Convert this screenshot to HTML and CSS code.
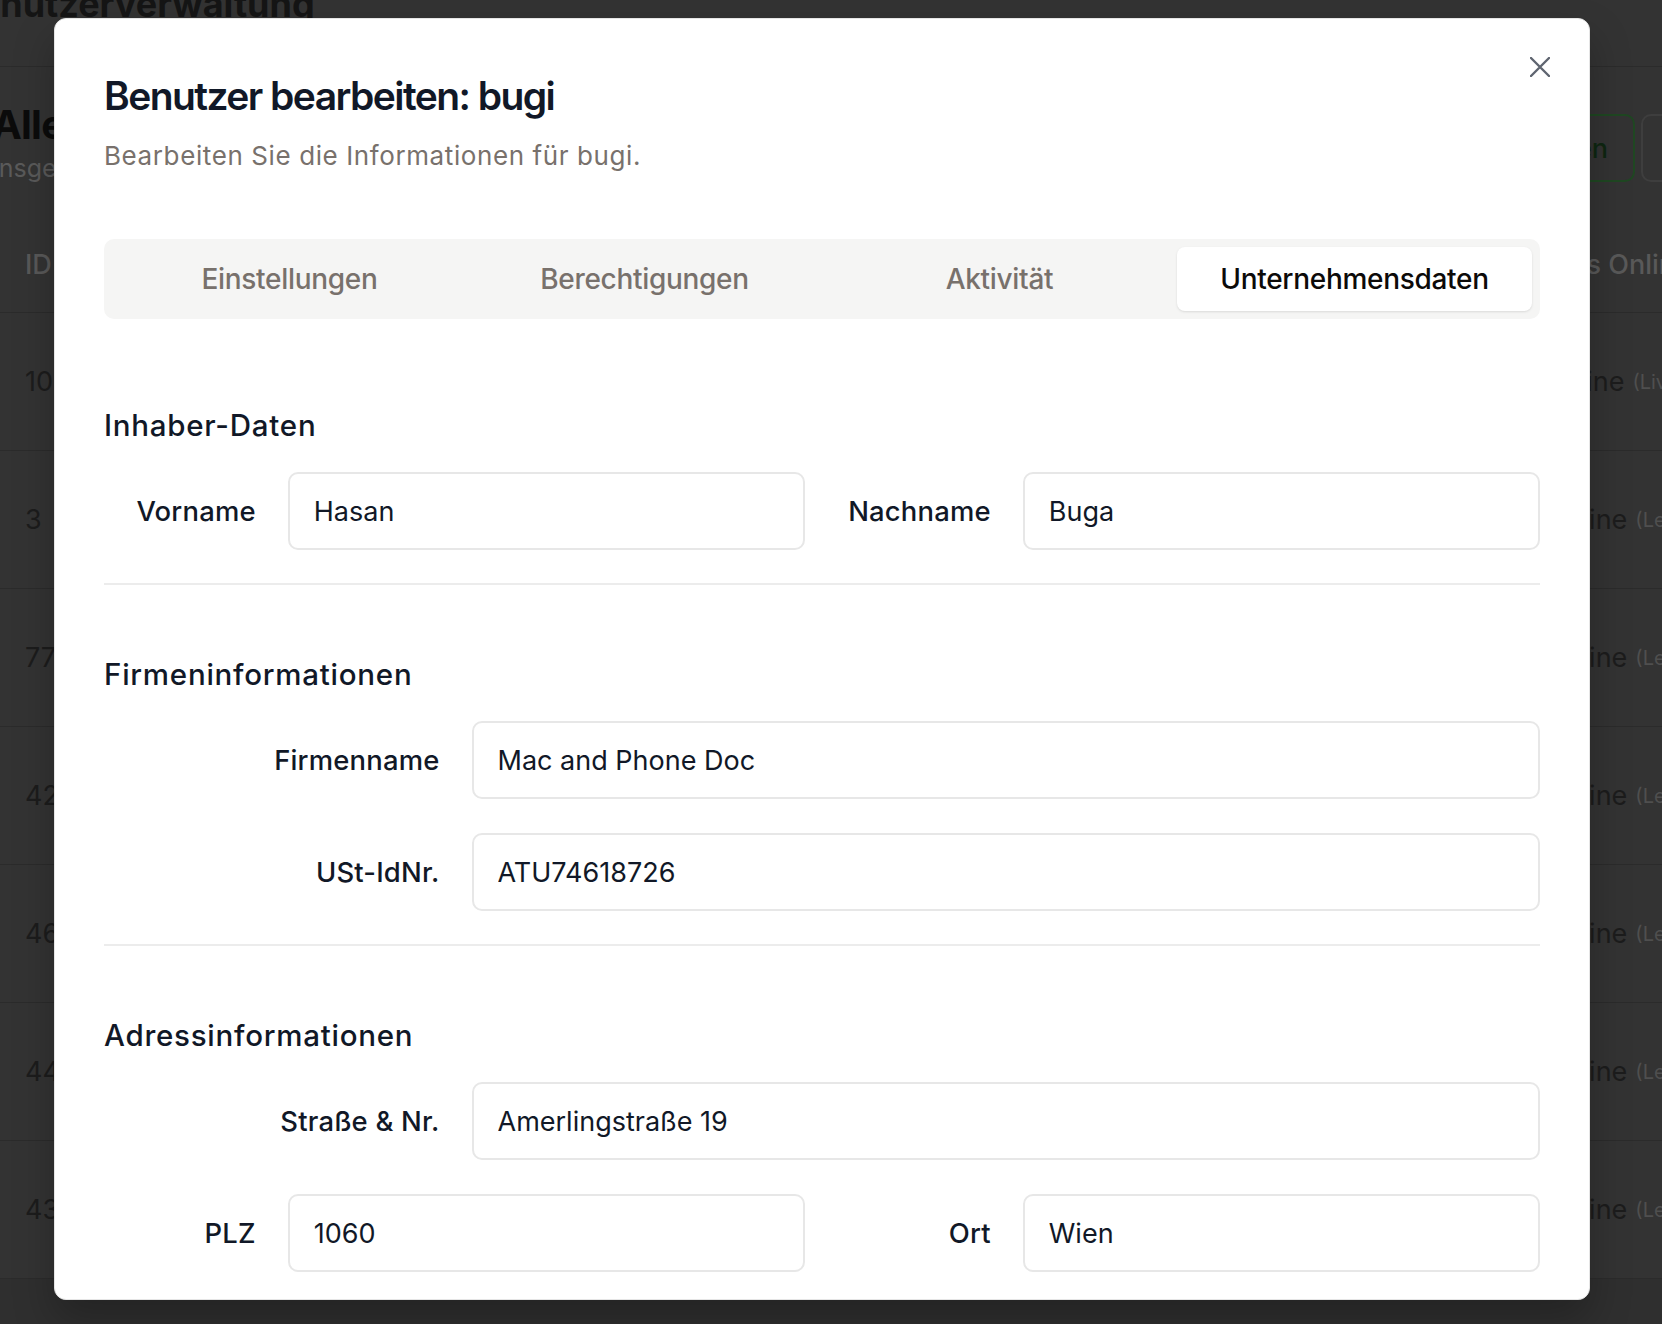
FILE: index.html
```html
<!DOCTYPE html>
<html lang="de">
<head>
<meta charset="utf-8">
<title>Benutzerverwaltung</title>
<link rel="stylesheet" href="styles.css">
</head>
<body>
<div class="page">
  <header class="topbar"><h1 class="topbar-title">Benutzerverwaltung</h1></header>
  <main class="content">
    <div class="toolbar">
      <div class="toolbar-text">
        <h2 class="list-title">Alle Benutzer</h2>
        <p class="list-sub">Insgesamt 7 Benutzer</p>
      </div>
      <div class="actions">
        <button class="btn btn-green">Neuen Benutzer anlegen</button>
        <button class="btn btn-outline">Exportieren</button>
      </div>
    </div>
    <div class="table">
      <div class="trow thead"><span class="cell-id">ID</span><span class="cell-mid">Benutzername</span><span class="cell-status">Status Online</span></div>
      <div class="trow"><span class="cell-id">10</span><span class="cell-mid">bugi</span><span class="cell-status"><i class="dot on"></i>Online <small>(Live)</small></span></div>
      <div class="trow"><span class="cell-id">3</span><span class="cell-mid">admin</span><span class="cell-status"><i class="dot"></i>Offline <small>(Letzte Aktivität)</small></span></div>
      <div class="trow"><span class="cell-id">77</span><span class="cell-mid">office</span><span class="cell-status"><i class="dot"></i>Offline <small>(Letzte Aktivität)</small></span></div>
      <div class="trow"><span class="cell-id">42</span><span class="cell-mid">technik</span><span class="cell-status"><i class="dot"></i>Offline <small>(Letzte Aktivität)</small></span></div>
      <div class="trow"><span class="cell-id">46</span><span class="cell-mid">service</span><span class="cell-status"><i class="dot"></i>Offline <small>(Letzte Aktivität)</small></span></div>
      <div class="trow"><span class="cell-id">44</span><span class="cell-mid">lager</span><span class="cell-status"><i class="dot"></i>Offline <small>(Letzte Aktivität)</small></span></div>
      <div class="trow"><span class="cell-id">43</span><span class="cell-mid">verkauf</span><span class="cell-status"><i class="dot"></i>Offline <small>(Letzte Aktivität)</small></span></div>
    </div>
  </main>
</div>

<div class="modal" role="dialog" aria-labelledby="modal-title">
  <button class="close" aria-label="Schließen">
    <svg viewBox="0 0 20 20" width="20" height="20"><path d="M1 1L19 19M19 1L1 19"/></svg>
  </button>
  <div class="modal-header">
    <h2 class="modal-title" id="modal-title">Benutzer bearbeiten: bugi</h2>
    <p class="modal-desc">Bearbeiten Sie die Informationen für bugi.</p>
  </div>
  <div class="tabs">
    <button class="tab">Einstellungen</button>
    <button class="tab">Berechtigungen</button>
    <button class="tab">Aktivität</button>
    <button class="tab active">Unternehmensdaten</button>
  </div>
  <div class="panel">
    <section class="fs">
      <h3 class="fs-title">Inhaber-Daten</h3>
      <div class="fs-rows">
        <div class="row2">
          <div class="field"><label class="lbl" for="vn">Vorname</label><input class="input" id="vn" value="Hasan"></div>
          <div class="field"><label class="lbl" for="nn">Nachname</label><input class="input" id="nn" value="Buga"></div>
        </div>
      </div>
    </section>
    <section class="fs">
      <h3 class="fs-title">Firmeninformationen</h3>
      <div class="fs-rows">
        <div class="field"><label class="lbl" for="fn">Firmenname</label><input class="input" id="fn" value="Mac and Phone Doc"></div>
        <div class="field"><label class="lbl" for="ust">USt-IdNr.</label><input class="input" id="ust" value="ATU74618726"></div>
      </div>
    </section>
    <section class="fs">
      <h3 class="fs-title">Adressinformationen</h3>
      <div class="fs-rows">
        <div class="field"><label class="lbl" for="str">Straße &amp; Nr.</label><input class="input" id="str" value="Amerlingstraße 19"></div>
        <div class="row2">
          <div class="field"><label class="lbl" for="plz">PLZ</label><input class="input" id="plz" value="1060"></div>
          <div class="field"><label class="lbl" for="ort">Ort</label><input class="input" id="ort" value="Wien"></div>
        </div>
      </div>
    </section>
  </div>
</div>
</body>
</html>
```

FILE: styles.css
```css
* { box-sizing: border-box; margin: 0; padding: 0; }
html, body { width: 1662px; height: 1324px; overflow: hidden; }
body {
  position: relative;
  font-family: "Inter", "Noto Sans", sans-serif;
  background: #2f2f2f;
  color: #1a1a1a;
}

/* ---------- dimmed background page ---------- */
.page { width: 1860px; margin-left: -8px; }
.topbar {
  display: flex;
  align-items: flex-start;
  height: 67px;
  background: #333333;
  border-bottom: 1px solid #2b2b2b;
}
.topbar-title {
  margin-left: -37px;
  margin-top: -17px;
  font-size: 36px;
  line-height: 42px;
  font-weight: 700;
  color: #151515;
  white-space: nowrap;
}
.content { background: #333333; }
.toolbar {
  display: flex;
  align-items: flex-start;
  justify-content: space-between;
  padding-top: 34px;
}
.list-title {
  font-size: 40px;
  line-height: 48px;
  font-weight: 700;
  color: #0b0b0b;
  letter-spacing: -0.02em;
  white-space: nowrap;
}
.list-sub {
  margin-top: 2px;
  font-size: 25px;
  line-height: 34px;
  color: #5a5a5a;
  white-space: nowrap;
}
.actions { display: flex; gap: 6px; margin-top: 13px; }
.btn {
  height: 68px;
  border-radius: 10px;
  font: 500 27px/1 "Inter", sans-serif;
  background: transparent;
  padding: 0 25px;
  white-space: nowrap;
}
.btn-green { border: 2px solid #1f4722; color: #0e2611; }
.btn-outline { border: 2px solid #3e3e3e; color: #1a1a1a; width: 211px; }

.table { margin-top: 32px; }
.trow {
  display: grid;
  grid-template-columns: 200px 1fr 340px;
  align-items: center;
  height: 138px;
  border-bottom: 1px solid #2b2b2b;
  font-size: 27px;
  color: #1c1c1c;
}
.trow.thead { height: 96px; color: #595959; font-weight: 500; }
.cell-id { padding-left: 33px; }
.cell-status { padding-left: 7px; white-space: nowrap; display: flex; align-items: center; }
.cell-status small { font-size: 20px; color: #4f4f4f; margin-left: 8px; }
.dot { width: 12px; height: 12px; border-radius: 50%; background: #2a2a2a; margin-right: 12px; display: inline-block; }
.dot.on { background: #1b3a20; }

/* ---------- modal ---------- */
.modal {
  position: absolute;
  top: 18px;
  left: 54px;
  width: 1536px;
  height: 1282px;
  overflow: hidden;
  background: #ffffff;
  border: 1px solid #e5e5e5;
  border-radius: 12px;
  padding: 49px 49px 0;
  box-shadow: 0 20px 40px rgba(0, 0, 0, 0.25);
}
.close {
  position: absolute;
  top: 37px;
  right: 38px;
  width: 22px;
  height: 22px;
  border: 0;
  background: transparent;
  display: flex;
  align-items: center;
  justify-content: center;
}
.close svg { width: 20px; height: 20px; }
.close path { stroke: #5f6570; stroke-width: 2.4; stroke-linecap: round; fill: none; }

.modal-title {
  margin-top: 2px;
  font-size: 39px;
  line-height: 52px;
  font-weight: 600;
  letter-spacing: -0.04em;
  color: #111827;
}
.modal-desc {
  margin-top: 16px;
  font-size: 26px;
  line-height: 36px;
  letter-spacing: 0.6px;
  color: #78716c;
}

.tabs {
  margin-top: 65px;
  display: grid;
  grid-template-columns: repeat(4, 1fr);
  padding: 8px;
  background: #f5f5f4;
  border-radius: 10px;
  height: 80px;
}
.tab {
  height: 64px;
  border: 0;
  border-radius: 8px;
  background: transparent;
  font: 500 28px/40px "Inter", sans-serif;
  letter-spacing: -0.3px;
  color: #78716c;
}
.tab.active {
  background: #ffffff;
  color: #0c0a09;
  box-shadow: 0 1px 3px rgba(0, 0, 0, 0.08), 0 1px 2px rgba(0, 0, 0, 0.04);
}

.panel { margin-top: 86px; }
.fs { padding-bottom: 33px; border-bottom: 2px solid #ececec; }
.fs + .fs { padding-top: 69px; }
.fs-title {
  font-size: 29.5px;
  line-height: 40px;
  font-weight: 500;
  letter-spacing: 0.75px;
  color: #111827;
  margin-bottom: 27px;
}
.fs-rows { display: flex; flex-direction: column; gap: 34px; }
.row2 { display: grid; grid-template-columns: 1fr 1fr; gap: 34px; }
.field {
  display: grid;
  grid-template-columns: repeat(4, 1fr);
  gap: 34px;
  align-items: center;
}
.lbl {
  text-align: right;
  margin-right: -2px;
  font-size: 27.4px;
  line-height: 40px;
  font-weight: 500;
  letter-spacing: 0.2px;
  color: #111827;
  white-space: nowrap;
}
.input {
  grid-column: span 3;
  width: 100%;
  height: 78px;
  border: 2px solid #e7e7e7;
  border-radius: 10px;
  padding: 0 24px;
  background: #ffffff;
  font: 400 27px/1 "Inter", sans-serif;
  color: #111827;
  outline: none;
}
```
